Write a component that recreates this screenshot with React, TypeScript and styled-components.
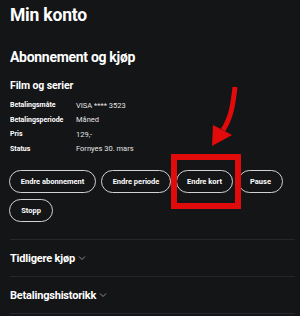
import React from 'react';
import styled, { createGlobalStyle } from 'styled-components';

const Global = createGlobalStyle`
  html, body {
    margin: 0;
    padding: 0;
    background: #141517;
  }
  body {
    font-family: Roboto, "Noto Sans", "Liberation Sans", sans-serif;
    color: #fff;
  }
`;

const Page = styled.div`
  position: relative;
  width: 300px;
  height: 316px;
  overflow: hidden;
  padding: 0 5px 0 10px;
  box-sizing: border-box;
`;

const Title = styled.h1`
  margin: 0;
  padding-top: 4px;
  font-size: 17.5px;
  line-height: 22px;
  font-weight: 700;
  letter-spacing: -0.2px;
`;

const SectionTitle = styled.h2`
  margin: 22px 0 0;
  font-size: 14px;
  line-height: 18px;
  font-weight: 700;
  letter-spacing: -0.3px;
`;

const SubTitle = styled.h3`
  margin: 13px 0 0;
  font-size: 10.5px;
  line-height: 14px;
  font-weight: 700;
  letter-spacing: -0.1px;
`;

const InfoTable = styled.div`
  display: grid;
  grid-template-columns: 66px 1fr;
  grid-auto-rows: 14.5px;
  margin-top: 5px;
  align-items: center;
  font-size: 7px;
`;

const Label = styled.div`
  font-weight: 700;
`;

const Value = styled.div`
  color: #e4e4e4;
  font-size: 7.5px;
`;

const Buttons = styled.div`
  position: relative;
  display: flex;
  flex-wrap: wrap;
  gap: 6px 5px;
  margin-top: 14px;
  margin-left: -1px;
`;

const Pill = styled.button<{ $w: number }>`
  width: ${(p) => p.$w}px;
  height: 23px;
  padding: 0;
  border: 1px solid #d2d2d2;
  border-radius: 12px;
  background: transparent;
  color: #fff;
  font-family: inherit;
  font-size: 7.5px;
  font-weight: 700;
  box-sizing: border-box;
  white-space: nowrap;
`;

const Divider = styled.div`
  height: 1px;
  background: #26272a;
`;

const Collapsible = styled.div`
  height: 36px;
  display: flex;
  align-items: center;
  gap: 3px;
  font-size: 11px;
  font-weight: 700;
  letter-spacing: -0.2px;
`;

const Highlight = styled.div`
  position: absolute;
  left: 162px;
  top: -16px;
  width: 70px;
  height: 55px;
  border: 6px solid #e20b0b;
  box-sizing: border-box;
  pointer-events: none;
`;

const Arrow = styled.svg`
  position: absolute;
  left: 195px;
  top: 80px;
`;

function Chevron() {
  return (
    <svg width="8" height="6" viewBox="0 0 8 6">
      <path d="M1 1.5 L4 4.5 L7 1.5" fill="none" stroke="#9a9a9a" strokeWidth="0.9" />
    </svg>
  );
}

const rows = [
  ['Betalingsmåte', 'VISA **** 3523'],
  ['Betalingsperiode', 'Måned'],
  ['Pris', '129,-'],
  ['Status', 'Fornyes 30. mars'],
];

const actions: [string, number][] = [
  ['Endre abonnement', 87],
  ['Endre periode', 70],
  ['Endre kort', 57],
  ['Pause', 45],
  ['Stopp', 44],
];

export default function App() {
  return (
    <>
      <Global />
      <Page>
        <Title>Min konto</Title>
        <SectionTitle>Abonnement og kjøp</SectionTitle>
        <SubTitle>Film og serier</SubTitle>
        <InfoTable>
          {rows.map(([k, v]) => (
            <React.Fragment key={k}>
              <Label>{k}</Label>
              <Value>{v}</Value>
            </React.Fragment>
          ))}
        </InfoTable>
        <Buttons>
          {actions.map(([t, w]) => (
            <Pill key={t} $w={w}>
              {t}
            </Pill>
          ))}
          <Highlight />
        </Buttons>
        <div style={{ height: 17 }} />
        <Divider />
        <Collapsible>
          Tidligere kjøp <Chevron />
        </Collapsible>
        <Divider />
        <Collapsible>
          Betalingshistorikk <Chevron />
        </Collapsible>
        <Divider />
        <Arrow width="50" height="72" viewBox="0 0 50 72">
          <path d="M40 7 C38 25 36 38 28 50" fill="none" stroke="#e20b0b" strokeWidth="5" />
          <path d="M17 66 L37 55 L18 45 Z" fill="#e20b0b" />
        </Arrow>
      </Page>
    </>
  );
}
